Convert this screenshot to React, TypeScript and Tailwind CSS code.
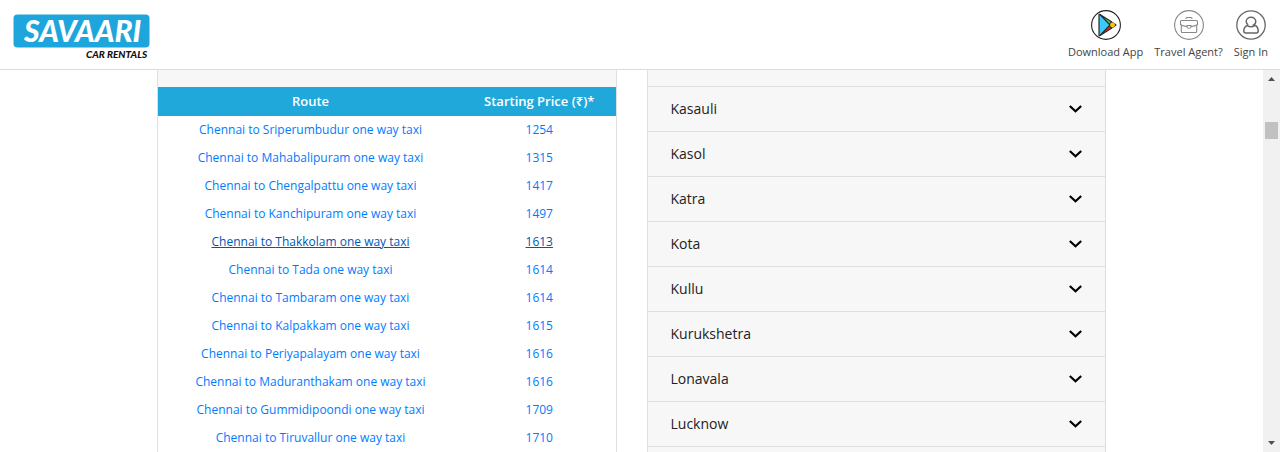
import { useState } from "react";

type Route = { city: string; price: number; active?: boolean };

const routes: Route[] = [
  { city: "Sriperumbudur", price: 1254 },
  { city: "Mahabalipuram", price: 1315 },
  { city: "Chengalpattu", price: 1417 },
  { city: "Kanchipuram", price: 1497 },
  { city: "Thakkolam", price: 1613, active: true },
  { city: "Tada", price: 1614 },
  { city: "Tambaram", price: 1614 },
  { city: "Kalpakkam", price: 1615 },
  { city: "Periyapalayam", price: 1616 },
  { city: "Maduranthakam", price: 1616 },
  { city: "Gummidipoondi", price: 1709 },
  { city: "Tiruvallur", price: 1710 },
];

const cities = ["Kasauli", "Kasol", "Katra", "Kota", "Kullu", "Kurukshetra", "Lonavala", "Lucknow"];

function Logo() {
  return (
    <svg width="144" height="60" viewBox="0 0 144 60" role="img" aria-label="Savaari Car Rentals">
      <rect x="0.5" y="8.5" width="136" height="33" rx="4" fill="#1ea5db" />
      <text x="11" y="36" fontFamily="Lato, sans-serif" fontSize="30" fontWeight="900" fontStyle="italic" fill="#fff">
        SAVAARI
      </text>
      <text x="73" y="52" fontFamily="Lato, sans-serif" fontSize="10" fontWeight="900" fontStyle="italic" fill="#111">
        CAR RENTALS
      </text>
    </svg>
  );
}

function PlayIcon() {
  return (
    <svg width="30" height="30" viewBox="0 0 30 30" aria-hidden="true">
      <circle cx="15" cy="15" r="14.4" fill="#fff" stroke="#222" strokeWidth="1.1" />
      <g stroke="#2b2b2b" strokeWidth="1.2" strokeLinejoin="round">
        <path d="M9 4.5 20.5 11.8 18 15Z" fill="#3fd04f" />
        <path d="M9 25.5 20.5 18.2 18 15Z" fill="#e8262d" />
        <path d="M20.5 12 24.5 14.4Q25.3 15 24.5 15.6L20.5 18 18.5 15Z" fill="#ffc400" />
        <path d="M8 4.6Q8 4 8.8 4.4L19 15 8.8 25.6Q8 26 8 25.4Z" fill="#3cc8fa" />
      </g>
      <circle cx="21.5" cy="15" r="2.4" fill="#ffc400" />
    </svg>
  );
}

function BriefcaseIcon() {
  return (
    <svg width="30" height="30" viewBox="0 0 30 30" fill="none" stroke="#888" strokeWidth="1.1" aria-hidden="true">
      <circle cx="15" cy="15" r="14.4" />
      <path d="M12 9V8.5Q12 7.5 13 7.5H17Q18 7.5 18 8.5V9" />
      <path d="M7.5 10.5H22.5Q23.5 10.5 23.5 11.5V14.5Q22 16 17 16.5M13 16.5Q8 16 6.5 14.5V11.5Q6.5 10.5 7.5 10.5" />
      <path d="M7.3 16V21.5Q7.3 22.5 8.3 22.5H21.7Q22.7 22.5 22.7 21.5V16" />
      <path d="M13 15.5H17V17Q16.8 18.3 15 18.3T13 17Z" />
    </svg>
  );
}

function UserIcon() {
  return (
    <svg width="30" height="30" viewBox="0 0 30 30" fill="none" stroke="#666" strokeWidth="1.5" aria-hidden="true">
      <circle cx="15" cy="15" r="14.2" strokeWidth="1.3" />
      <path d="M12.2 14.8C10.5 13.8 10.2 12.5 10.2 11.6A4.8 4.3 0 0 1 19.8 11.6C19.8 12.5 19.5 13.8 17.8 14.8C21.5 15.8 22.2 18.2 22.2 21Q22.2 23 20.2 23H9.8Q7.8 23 7.8 21C7.8 18.2 8.5 16.5 11.2 15.6Q15 18 18.8 15.6" />
    </svg>
  );
}

const links = [
  { label: "Download App", icon: <PlayIcon /> },
  { label: "Travel Agent?", icon: <BriefcaseIcon /> },
  { label: "Sign In", icon: <UserIcon /> },
];

function CityRow({ name }: { name: string }) {
  const [open, setOpen] = useState(false);
  return (
    <li className="border-b border-[#dfdfdf]">
      <button
        type="button"
        aria-expanded={open}
        onClick={() => setOpen(!open)}
        className="flex h-11 w-full cursor-pointer items-center justify-between px-[23px] text-left text-sm text-[#222]"
      >
        {name}
        <svg width="13" height="8" viewBox="0 0 13 8" fill="none" stroke="#000" strokeWidth="2.2" aria-hidden="true">
          <path d="M0.8 1 6.5 6.2 12.2 1" />
        </svg>
      </button>
      {open && <p className="px-6 pb-3 text-xs text-[#222]">Chennai to {name}</p>}
    </li>
  );
}

export default function App() {
  return (
    <div className="flex h-screen flex-col bg-white font-['Open_Sans','Noto_Sans',sans-serif]">
      <header className="flex shrink-0 items-start justify-between border-b border-[#dcdcdc] pr-3 pl-[13px]">
        <a href="#home" className="pt-[6px] pb-[3px]">
          <Logo />
        </a>
        <nav className="flex gap-[11px] pt-[10px]">
          {links.map((l) => (
            <a key={l.label} href="#account" className="flex flex-col items-center gap-1 text-[11px] leading-4 text-[#444]">
              {l.icon}
              {l.label}
            </a>
          ))}
        </nav>
      </header>

      <div className="flex min-h-0 flex-1">
        <main className="min-w-0 flex-1 overflow-hidden">
          <div className="mx-auto grid max-w-[949px] grid-cols-2 gap-[30px]">
            <section className="border-x border-[#dfdfdf]">
              <div className="h-[17px] bg-[#f7f7f7]" />
              <table className="w-full table-fixed text-center">
                <thead>
                  <tr className="h-[29px] bg-[#21a8db] text-[13px] text-white">
                    <th scope="col" className="w-2/3 p-0 font-semibold">Route</th>
                    <th scope="col" className="w-1/3 p-0 font-semibold">Starting Price (₹)*</th>
                  </tr>
                </thead>
                <tbody>
                  {routes.map((r) => (
                    <tr
                      key={r.city}
                      className={r.active ? "h-7 text-xs text-[#0056b3] underline" : "h-7 text-xs text-[#007bff]"}
                    >
                      <td className="p-0">
                        <a href="#route">Chennai to {r.city} one way taxi</a>
                      </td>
                      <td className="p-0">
                        <a href="#route">{r.price}</a>
                      </td>
                    </tr>
                  ))}
                </tbody>
              </table>
            </section>

            <section className="border-x border-[#dfdfdf] bg-[#f7f7f7]">
              <div className="h-[17px] border-b border-[#dfdfdf]" />
              <ul>
                {cities.map((c) => (
                  <CityRow key={c} name={c} />
                ))}
              </ul>
            </section>
          </div>
        </main>

        <div className="flex w-[17px] shrink-0 flex-col items-center justify-between bg-[#f1f1f1] py-[7px]" aria-hidden="true">
          <div className="flex flex-col items-center gap-[41px]">
            <svg width="7" height="4" viewBox="0 0 7 4" fill="#505050">
              <path d="M0 4 3.5 0 7 4Z" />
            </svg>
            <div className="h-[17px] w-[13px] bg-[#c1c1c1]" />
          </div>
          <svg width="7" height="4" viewBox="0 0 7 4" fill="#505050">
            <path d="M0 0 3.5 4 7 0Z" />
          </svg>
        </div>
      </div>
    </div>
  );
}
